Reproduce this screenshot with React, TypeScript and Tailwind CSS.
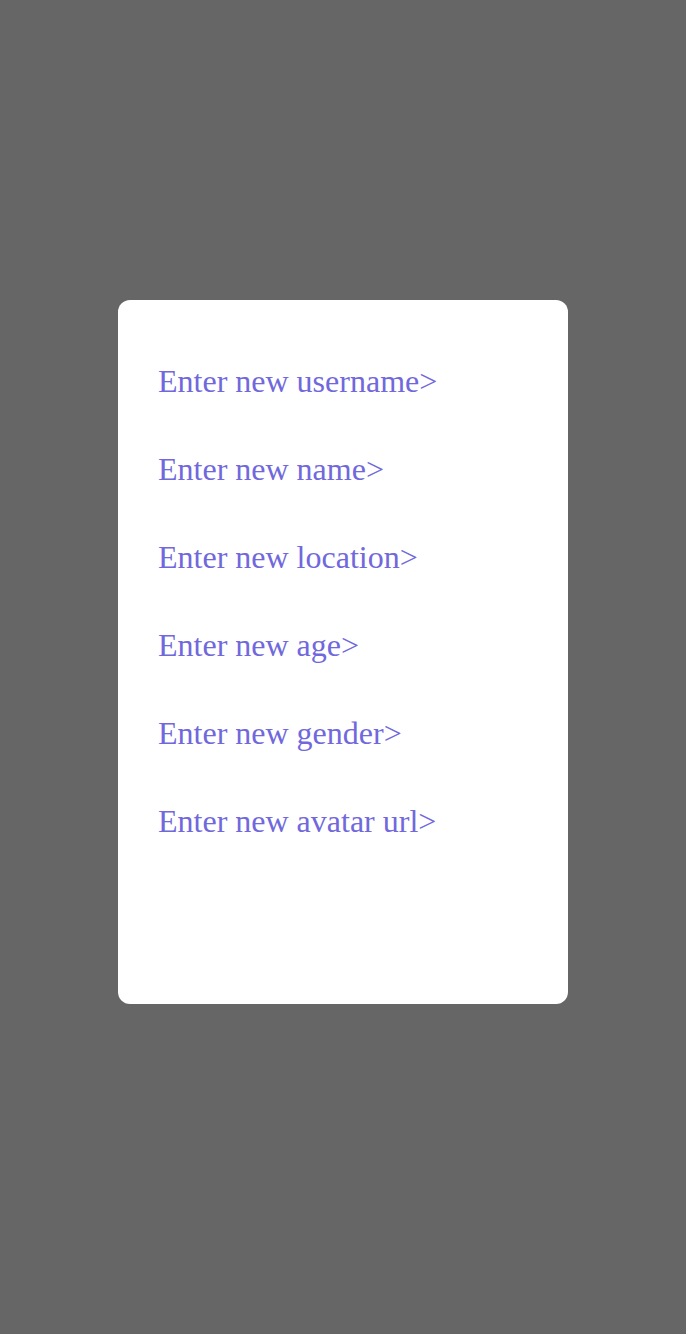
const FIELDS = [
  "Enter new username>",
  "Enter new name>",
  "Enter new location>",
  "Enter new age>",
  "Enter new gender>",
  "Enter new avatar url>",
]

export default function App() {
  return (
    <div className="w-full h-[1334px] bg-[#666666] pt-[300px] flex justify-center">
      <div className="w-[450px] h-[704px] bg-white rounded-[12px] pl-[40px] pt-[64px] flex flex-col gap-[52.6px]">
        {FIELDS.map((f) => (
          <div
            key={f}
            className="text-[32px] leading-[35.4px] text-[#7068dc]"
            style={{ fontFamily: '"Liberation Serif", serif' }}
          >
            {f}
          </div>
        ))}
      </div>
    </div>
  )
}
